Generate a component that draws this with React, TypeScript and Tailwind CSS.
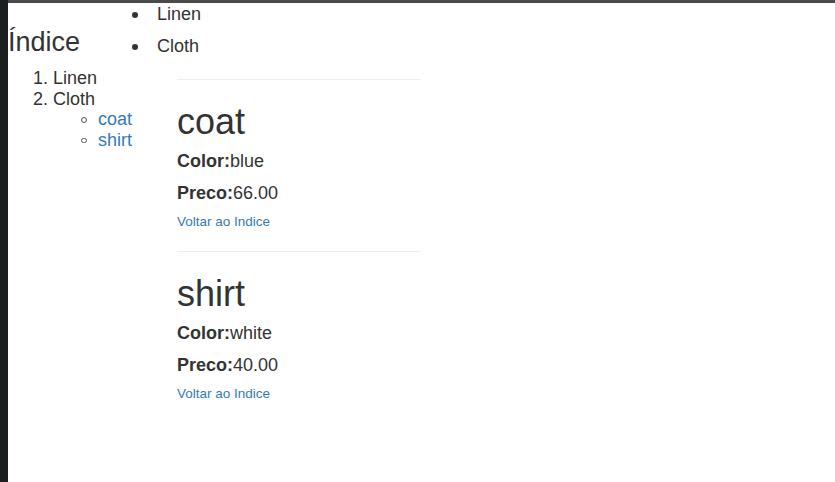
const produtos = [
  { nome: 'coat', cor: 'blue', preco: '66.00' },
  { nome: 'shirt', cor: 'white', preco: '40.00' },
];

export default function App() {
  return (
    <div className="min-h-screen flex bg-white font-['Liberation_Sans',Arial,sans-serif] text-[#333]">
      <div className="w-2 shrink-0 bg-[#1b1f1f]" />
      <div className="flex-1 flex flex-col">
        <div className="h-[3px] bg-[#4a4a4a]" />
        <div className="flex pt-[1px]">
          {/* indice */}
          <div className="w-[120px] shrink-0">
            <h2 className="mt-[22px] text-[27px] leading-[32px]">Índice</h2>
            <ol className="mt-[10px] list-decimal pl-[45px] text-[18px] leading-[20.7px]">
              <li>Linen</li>
              <li>
                Cloth
                <ul>
                  {produtos.map((p) => (
                    <li key={p.nome} className="flex items-center">
                      <span className="ml-[28px] w-[5.5px] h-[5.5px] rounded-full border border-[#555] shrink-0" />
                      <a href={'#' + p.nome} className="ml-[11.5px] text-[#337ab7]">
                        {p.nome}
                      </a>
                    </li>
                  ))}
                </ul>
              </li>
            </ol>
          </div>

          {/* conteudo */}
          <div className="flex-1">
            <ul className="text-[18px] leading-[21px]">
              <li className="flex items-center mb-[11px]">
                <span className="ml-[3.5px] w-[6px] h-[6px] rounded-full bg-[#333] shrink-0" />
                <span className="ml-[19.5px]">Linen</span>
              </li>
              <li className="flex items-center">
                <span className="ml-[3.5px] w-[6px] h-[6px] rounded-full bg-[#333] shrink-0" />
                <span className="ml-[19.5px]">Cloth</span>
              </li>
            </ul>
            <div className="ml-[49px] w-[244px] mt-[22px]">
              {produtos.map((p) => (
                <div key={p.nome} id={p.nome}>
                  <hr className="border-0 border-t border-[#eee]" />
                  <h1 className="mt-[22px] text-[36px] leading-[40px]">{p.nome}</h1>
                  <p className="mt-[9px] text-[18px] leading-[21px]">
                    <b>Color:</b>
                    {p.cor}
                  </p>
                  <p className="mt-[11px] text-[18px] leading-[21px]">
                    <b>Preco:</b>
                    {p.preco}
                  </p>
                  <a href="#" className="block mt-[10px] mb-[21px] text-[13.5px] leading-[16px] text-[#337ab7]">
                    Voltar ao Indice
                  </a>
                </div>
              ))}
            </div>
          </div>
        </div>
      </div>
    </div>
  );
}
